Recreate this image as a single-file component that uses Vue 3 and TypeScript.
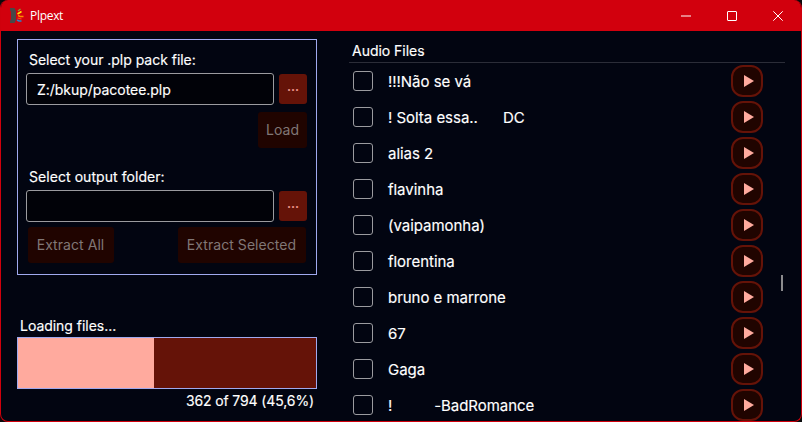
<script setup lang="ts">
interface AudioFile {
  name: string
  selected: boolean
}

const packPath = 'Z:/bkup/pacotee.plp'
const files: AudioFile[] = [
  '!!!Não se vá',
  '! Solta essa..      DC',
  'alias 2',
  'flavinha',
  '(vaipamonha)',
  'florentina',
  'bruno e marrone',
  '67',
  'Gaga',
  '!          -BadRomance',
].map((name) => ({ name, selected: false }))

const loaded = 362
const total = 794
const percent = (loaded / total) * 100
const percentLabel = percent.toFixed(1).replace('.', ',')
</script>

<template>
  <div class="window">
    <header class="titlebar">
      <svg class="logo" width="16" height="18" viewBox="0 0 16 18">
        <path d="M1 1h4.500l1.500 3v9l-1.500 3H1v-2l1-2V5L1 3z" fill="#484848" />
        <path d="M9 4l2.500-2" stroke="#7fa33a" stroke-width="1.300" />
        <path d="M8.500 7l4-2.500" stroke="#ffe800" stroke-width="1.500" />
        <path d="M9 8.500l2 1h3.500" stroke="#ff8a00" stroke-width="1.400" fill="none" />
        <path d="M8.500 11l4 1" stroke="#ff4a20" stroke-width="1.100" />
        <path d="M8 13l2 1h2.500" stroke="#2488d0" stroke-width="1.500" fill="none" />
      </svg>
      <span class="title">Plpext</span>
      <div class="controls">
        <svg width="10" height="10" viewBox="0 0 10 10"><path d="M0 5h10" /></svg>
        <svg width="10" height="10" viewBox="0 0 10 10"><rect x=".5" y=".5" width="9" height="9" rx=".5" /></svg>
        <svg width="10" height="10" viewBox="0 0 10 10"><path d="M.3.3l9.400 9.400M9.700.3L.3 9.700" /></svg>
      </div>
    </header>

    <main class="content">
      <section class="left">
        <div class="panel">
          <div class="label">Select your .plp pack file:</div>
          <div class="field">
            <div class="input">{{ packPath }}</div>
            <button class="browse">...</button>
          </div>
          <div class="load-row"><button class="action load" disabled>Load</button></div>
          <div class="label output">Select output folder:</div>
          <div class="field">
            <div class="input"></div>
            <button class="browse">...</button>
          </div>
          <div class="extract-row">
            <button class="action all" disabled>Extract All</button>
            <button class="action selected" disabled>Extract Selected</button>
          </div>
        </div>
        <div class="status"><span class="loading">Loading files...</span></div>
        <div class="progress"><div class="fill" :style="{ width: percent + '%' }"></div></div>
        <div class="count"><span class="amount">{{ loaded }} of {{ total }} ({{ percentLabel }}%)</span></div>
      </section>

      <section class="right">
        <h2 class="heading"><span class="heading-text">Audio Files</span></h2>
        <div class="list">
          <ul class="rows">
            <li v-for="file in files" :key="file.name" class="row">
              <span class="check"></span>
              <span class="name">{{ file.name }}</span>
              <button class="play">
                <svg width="10" height="12" viewBox="0 0 10 12"><path d="M0 0l10 6L0 12z" /></svg>
              </button>
            </li>
          </ul>
          <div class="scroll"><div class="thumb"></div></div>
        </div>
      </section>
    </main>
  </div>
</template>

<style>
body {
  background: #0a0a0c;
  overflow: hidden;
}
</style>

<style scoped>
.window {
  box-sizing: border-box;
  width: 802px;
  height: 422px;
  display: flex;
  flex-direction: column;
  overflow: hidden;
  border: 1px solid #d0000c;
  border-top: 0;
  border-radius: 8px;
  background: #020511;
  color: #fff;
  font: 14px/20px Inter, sans-serif;
  letter-spacing: -0.03px;
  -webkit-text-stroke: 0.15px currentColor;
}
.titlebar {
  flex: none;
  box-sizing: border-box;
  height: 31px;
  display: flex;
  align-items: center;
  padding: 0 18px 0 8px;
  background: #d2000d;
}
.title {
  margin-left: 5px;
  font: 12px/16px "Open Sans", sans-serif;
  letter-spacing: -0.3px;
  -webkit-text-stroke: 0;
}
.controls {
  display: flex;
  gap: 36px;
  margin-left: auto;
}
.controls svg {
  display: block;
  fill: none;
  stroke: #fff;
}
.content {
  flex: 1;
  min-height: 0;
  display: flex;
}
.left {
  width: 300px;
  margin: 8px 0 0 16px;
}
.panel {
  box-sizing: border-box;
  height: 236px;
  padding: 10px 9px 0 8px;
  border: 1px solid #a0a9ef;
}
.label {
  height: 23px;
  padding-left: 3px;
}
.output {
  margin-top: 19px;
  letter-spacing: 0.06px;
}
.field {
  display: flex;
  align-items: center;
  gap: 5px;
}
.input {
  box-sizing: border-box;
  width: 248px;
  height: 32px;
  padding: 6px 10px 4px;
  border: 1px solid #9b9b9f;
  border-radius: 3px;
  background: #010208;
}
button {
  box-sizing: border-box;
  padding: 0;
  border: 0;
  font: inherit;
  letter-spacing: inherit;
}
.browse {
  width: 28px;
  height: 30px;
  padding-bottom: 6px;
  border-radius: 3px;
  background: #651308;
  color: #ffaa9e;
}
.load-row {
  display: flex;
  justify-content: flex-end;
  margin-top: 7px;
}
.action {
  height: 36px;
  border-radius: 3px;
  background: #200400;
  color: #807776;
  letter-spacing: 0.06px;
  -webkit-text-stroke: 0;
}
.load {
  width: 49px;
}
.extract-row {
  display: flex;
  justify-content: space-between;
  margin-top: 5px;
  padding: 0 1px 0 2px;
}
.all {
  width: 86px;
  padding-right: 1px;
}
.selected {
  width: 128px;
  padding-right: 1px;
}
.status {
  height: 21px;
  margin-top: 41px;
  padding-left: 3px;
}
.progress {
  box-sizing: border-box;
  height: 52px;
  border: 1px solid #a0a9ef;
  background: #651308;
}
.fill {
  height: 100%;
  background: #ffaa9e;
}
.count {
  padding: 2px 3px 0 0;
  letter-spacing: -0.12px;
  text-align: right;
}
.right {
  width: 436px;
  margin: 10px 0 0 32px;
}
.heading {
  box-sizing: border-box;
  height: 22px;
  margin: 0;
  padding-left: 3px;
  border-bottom: 1px solid #2b2d38;
  font: inherit;
}
.list {
  display: flex;
  justify-content: space-between;
}
.rows {
  width: 414px;
  margin: 0;
  padding: 0;
  list-style: none;
}
.row {
  height: 36px;
  display: flex;
  align-items: center;
  padding-left: 4px;
}
.check {
  box-sizing: border-box;
  width: 20px;
  height: 20px;
  border: 1px solid #9b9b9f;
  border-radius: 3px;
}
.name {
  margin: 2px 0 0 15px;
  font-size: 15px;
  white-space: pre;
}
.play {
  width: 32px;
  height: 32px;
  display: flex;
  align-items: center;
  justify-content: center;
  margin-left: auto;
  padding-left: 3px;
  border: 2px solid #651308;
  border-radius: 12px;
  background: #200400;
}
.play svg {
  fill: #ffaa9e;
}
.scroll {
  padding: 212px 2px 0 0;
}
.thumb {
  width: 2px;
  height: 16px;
  background: #8b8b8d;
}
</style>
